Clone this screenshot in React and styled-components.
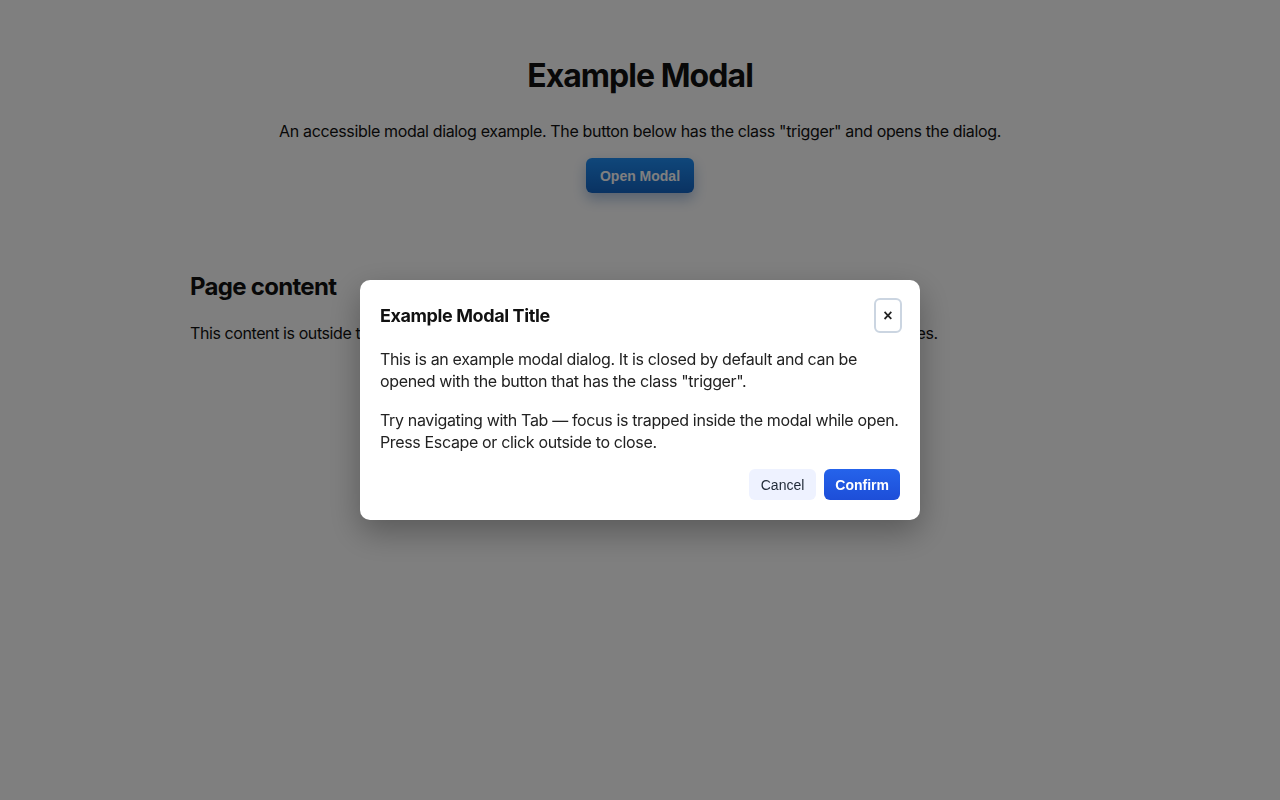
import React from 'react'
import styled, { createGlobalStyle } from 'styled-components'

const GlobalStyle = createGlobalStyle`
    html, body {
        margin: 0;
        padding: 0;
        background: #ffffff;
        font-family: Inter, "Noto Sans", sans-serif;
        color: #111111;
        letter-spacing: -0.35px;
    }
`

const Page = styled.div`
    min-height: 800px;
    display: flex;
    flex-direction: column;
    align-items: center;
`

const Hero = styled.header`
    display: flex;
    flex-direction: column;
    align-items: center;
    padding-top: 57px;
`

const Title = styled.h1`
    margin: 0;
    font-size: 32px;
    line-height: 38px;
    font-weight: 700;
    letter-spacing: -0.95px;
`

const Lead = styled.p`
    margin: 25px 0 0;
    font-size: 16px;
    line-height: 22px;
`

const Trigger = styled.button`
    margin-top: 16px;
    width: 108px;
    height: 35px;
    border: none;
    border-radius: 6px;
    background: linear-gradient(180deg, #1f8ef5 0%, #1465c4 100%);
    color: #ffffff;
    font-family: "Liberation Sans", Arial, sans-serif;
    font-size: 14px;
    font-weight: 700;
    letter-spacing: 0;
    box-shadow: 0 6px 14px rgba(20, 80, 160, 0.35);
    cursor: pointer;
`

const Main = styled.main`
    width: 900px;
    margin-top: 79px;
`

const SectionTitle = styled.h2`
    margin: 0;
    font-size: 24px;
    line-height: 30px;
    font-weight: 700;
    letter-spacing: -0.7px;
`

const Text = styled.p`
    margin: 20px 0 0;
    font-size: 16px;
    line-height: 22px;
    letter-spacing: -0.41px;
`

const Overlay = styled.div`
    position: fixed;
    inset: 0;
    background: rgba(0, 0, 0, 0.5);
    display: flex;
    align-items: center;
    justify-content: center;
`

const Dialog = styled.div`
    width: 560px;
    box-sizing: border-box;
    padding: 18px 20px 20px;
    background: #ffffff;
    border-radius: 10px;
    box-shadow: 0 12px 32px rgba(0, 0, 0, 0.3);
    color: #222222;
`

const DialogHeader = styled.div`
    display: flex;
    align-items: center;
    justify-content: space-between;
`

const DialogTitle = styled.h2`
    margin: 0;
    font-size: 18px;
    font-weight: 700;
    color: #111111;
    letter-spacing: -0.4px;
`

const CloseButton = styled.button`
    width: 28px;
    height: 35px;
    margin-right: -2px;
    padding: 0;
    border: 2px solid #cbd5e1;
    border-radius: 6px;
    background: #ffffff;
    color: #222222;
    font-family: "Liberation Sans", Arial, sans-serif;
    font-size: 16px;
    font-weight: 700;
    line-height: 1;
    display: flex;
    align-items: center;
    justify-content: center;
    cursor: pointer;
`

const DialogBody = styled.div`
    display: flex;
    flex-direction: column;
    gap: 17px;
    padding-top: 15px;

    p {
        margin: 0;
        font-size: 16px;
        line-height: 22px;
    }
`

const DialogFooter = styled.div`
    display: flex;
    justify-content: flex-end;
    gap: 8px;
    margin-top: 16px;
`

const ActionButton = styled.button`
    height: 31px;
    padding: 0 ${p => (p.$primary ? '11px' : '12px')};
    border: none;
    border-radius: 6px;
    font-family: "Liberation Sans", Arial, sans-serif;
    font-size: 14px;
    letter-spacing: 0;
    font-weight: ${p => (p.$primary ? 700 : 400)};
    color: ${p => (p.$primary ? '#ffffff' : '#1f2937')};
    background: ${p => (p.$primary
        ? 'linear-gradient(180deg, #2563eb 0%, #1d4ed8 100%)'
        : '#eef2ff')};
    cursor: pointer;
`

const App = () => {
    return (
        <>
            <GlobalStyle />
            <Page>
                <Hero>
                    <Title>Example Modal</Title>
                    <Lead>An accessible modal dialog example. The button below has the class "trigger" and opens the dialog.</Lead>
                    <Trigger className="trigger">Open Modal</Trigger>
                </Hero>

                <Main>
                    <SectionTitle>Page content</SectionTitle>
                    <Text>This content is outside the modal. When the modal is open, it is hidden from most assistive technologies.</Text>
                </Main>
            </Page>

            <Overlay>
                <Dialog role="dialog" aria-modal="true">
                    <DialogHeader>
                        <DialogTitle>Example Modal Title</DialogTitle>
                        <CloseButton aria-label="Close">×</CloseButton>
                    </DialogHeader>
                    <DialogBody>
                        <p>This is an example modal dialog. It is closed by default and can be opened with the button that has the class "trigger".</p>
                        <p>Try navigating with Tab — focus is trapped inside the modal while open. Press Escape or click outside to close.</p>
                    </DialogBody>
                    <DialogFooter>
                        <ActionButton>Cancel</ActionButton>
                        <ActionButton $primary>Confirm</ActionButton>
                    </DialogFooter>
                </Dialog>
            </Overlay>
        </>
    )
}

export default App
